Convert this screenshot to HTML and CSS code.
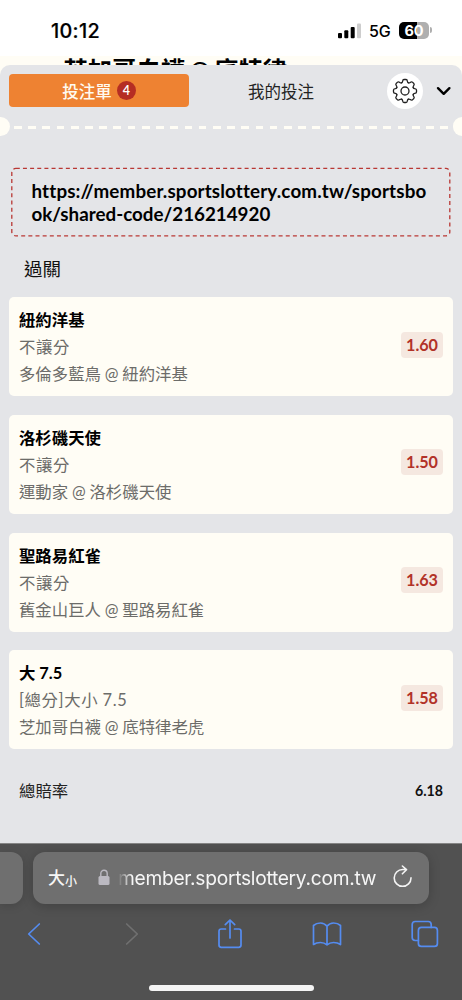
FILE: index.html
```html
<!DOCTYPE html>
<html lang="zh-Hant">
<head>
<meta charset="utf-8">
<meta name="viewport" content="width=device-width, initial-scale=1">
<title>投注單</title>
<link rel="stylesheet" href="styles.css">
</head>
<body>
<div class="screen">
  <header class="status">
    <span class="clock">10:12</span>
    <svg class="signal" width="24" height="16" viewBox="0 0 24 16"><rect x="0" y="10" width="4" height="5.3" rx="1"/><rect x="6.3" y="7.3" width="4" height="8" rx="1"/><rect x="12.7" y="4" width="4" height="11.3" rx="1"/><rect x="19" y="0.5" width="4" height="14.8" rx="1" fill="#cdcdcd"/></svg>
    <span class="network">5G</span>
    <span class="battery"><span class="battery-level">60</span><i class="battery-tip"></i></span>
  </header>
  <div class="behind">芝加哥白襪 @ 底特律</div>
  <main class="sheet">
    <nav class="tabs">
      <div class="tab active">投注單<span class="count">4</span></div>
      <div class="tab mine">我的投注</div>
      <div class="gear"><svg width="26" height="26" viewBox="-13 -13 26 26" fill="none" stroke="#222" stroke-width="1.3" stroke-linecap="round">
        <defs><path id="tooth" d="M-3.4 -8.2Q-2.6 -8.6 -2.4 -9.7Q-2.2 -11.5 -1 -11.5H1Q2.2 -11.5 2.4 -9.7Q2.6 -8.6 3.4 -8.2"/></defs>
        <use href="#tooth"/><use href="#tooth" transform="rotate(45)"/><use href="#tooth" transform="rotate(90)"/><use href="#tooth" transform="rotate(135)"/><use href="#tooth" transform="rotate(180)"/><use href="#tooth" transform="rotate(225)"/><use href="#tooth" transform="rotate(270)"/><use href="#tooth" transform="rotate(315)"/>
        <circle r="4"/></svg></div>
      <svg class="chevron" width="16" height="10" viewBox="0 0 16 10" fill="none" stroke="#000" stroke-width="2.4" stroke-linecap="round" stroke-linejoin="round"><path d="M2 2.2L7.7 7.8L13.4 2.2"/></svg>
    </nav>
    <div class="tear"><i class="notch"></i><i class="dashes"></i><i class="notch right"></i></div>
    <div class="link-box">
      <svg class="link-frame" width="440" height="70" viewBox="0 0 440 70" fill="none" stroke="#b93834"><rect x="0.8" y="1.4" width="438" height="67.5" rx="4" stroke-width="1.3" stroke-dasharray="4 3.15"/></svg>
      <span class="link-start">https://member.sportslottery.com.tw/sportsbo</span><br>ok/shared-code/216214920
    </div>
    <h2 class="mode">過關</h2>
    <section class="bets">
      <article class="bet"><div><h3>紐約洋基</h3><p class="market">不讓分</p><p>多倫多藍鳥 @ 紐約洋基</p></div><span class="odds">1.60</span></article>
      <article class="bet"><div><h3>洛杉磯天使</h3><p class="market">不讓分</p><p>運動家 @ 洛杉磯天使</p></div><span class="odds">1.50</span></article>
      <article class="bet"><div><h3>聖路易紅雀</h3><p class="market">不讓分</p><p>舊金山巨人 @ 聖路易紅雀</p></div><span class="odds">1.63</span></article>
      <article class="bet"><div><h3>大 7.5</h3><p class="market">[總分]大小 7.5</p><p>芝加哥白襪 @ 底特律老虎</p></div><span class="odds">1.58</span></article>
    </section>
    <div class="total"><span>總賠率</span><b>6.18</b></div>
  </main>
  <footer class="browser">
    <div class="address-row">
      <div class="side-tab"></div>
      <div class="address">
        <span class="size-big">大</span><span class="size-small">小</span>
        <svg class="lock" width="12" height="17" viewBox="0 0 12 17"><rect x="0.5" y="7" width="11" height="9" rx="1.5" fill="#bbb9c1"/><path d="M2.8 7.5V4.4a3.2 3.2 0 0 1 6.4 0V7.5" fill="none" stroke="#bbb9c1" stroke-width="1.4"/></svg>
        <span class="domain">member.sportslottery.com.tw</span>
        <svg class="reload" width="20" height="23" viewBox="0 0 20 23" fill="none" stroke="#f4f4f4" stroke-width="1.6" stroke-linecap="round" stroke-linejoin="round"><path d="M18 12.9A8.4 8.4 0 1 1 9.6 4.5H13.5M9.4 1L13.5 4.7L9.4 8.8"/></svg>
      </div>
    </div>
    <div class="tools">
      <svg width="14" height="24" viewBox="0 0 14 24"><path d="M12.3 2L1.7 12L12.3 22"/></svg>
      <svg class="disabled" width="14" height="24" viewBox="0 0 14 24"><path d="M1.7 2L12.3 12L1.7 22"/></svg>
      <svg class="share" width="26" height="32" viewBox="0 0 26 32"><path d="M8.5 11H4.3Q2 11 2 13.3V27Q2 29.3 4.3 29.3H21.7Q24 29.3 24 27V13.3Q24 11 21.7 11H17.5M13 20V2.2M8.3 6.7L13 2L17.7 6.7"/></svg>
      <svg width="30" height="26" viewBox="0 0 30 26"><path d="M15 5.2Q12.5 2 8.4 2Q4.3 2 1.5 4.5V23.5Q4.4 21.5 8.4 21.5Q12.3 21.5 15 23.8Q17.7 21.5 21.6 21.5Q25.6 21.5 28.5 23.5V4.5Q25.7 2 21.6 2Q17.5 2 15 5.2V23.8"/></svg>
      <svg class="pages" width="28" height="28" viewBox="0 0 28 28"><path d="M7.4 20.5H4.2Q1.2 20.5 1.2 17.5V4.5Q1.2 1.5 4.2 1.5H17.2Q20.2 1.5 20.2 4.5V7.4"/><rect x="7.4" y="7.4" width="19" height="19" rx="3"/></svg>
    </div>
    <div class="home"></div>
  </footer>
</div>
</body>
</html>
```

FILE: styles.css
```css
* { box-sizing: border-box; }
body { margin: 0; background: #fff; font-family: Lato, "Noto Sans CJK TC", sans-serif; font-variant-ligatures: none; }
h2, h3, p { margin: 0; font-weight: 400; }
svg { display: block; flex: none; }
.screen { width: 462px; height: 1000px; overflow: hidden; display: flex; flex-direction: column; background: #fffdf5; }

.status { height: 56px; flex: none; background: #fff; display: flex; align-items: flex-start; padding: 23px 31px 0 51px; font-family: Inter, "Liberation Sans", sans-serif; }
.clock { width: 287px; font-size: 19.8px; line-height: 17px; font-weight: 500; letter-spacing: 0.3px; -webkit-text-stroke: 0.2px #000; }
.signal { margin-right: 7px; }
.network { width: 30px; font-size: 16px; line-height: 17px; font-weight: 500; letter-spacing: -0.1px; }
.battery { position: relative; width: 30px; height: 17px; margin-top: -1px; border-radius: 5px; background: linear-gradient(90deg, #000 60%, #afafaf 60%); }
.battery-level { display: block; text-align: center; font-size: 14.5px; line-height: 17px; font-weight: 700; color: #fff; }
.battery-tip { position: absolute; right: -3px; top: 5px; width: 2px; height: 6px; border-radius: 0 2px 2px 0; background: #afafaf; }

.behind { height: 9px; flex: none; overflow: hidden; padding-left: 63.5px; font-size: 24.3px; line-height: 28px; font-weight: 700; white-space: nowrap; word-spacing: -1.6px; }

.sheet { height: 778px; flex: none; border-radius: 10px 10px 0 0; background: #e4e5e8; }
.tabs { display: flex; align-items: center; height: 51px; padding-left: 9px; }
.tab { display: flex; align-items: center; justify-content: center; width: 180px; height: 33px; font-size: 16.5px; color: #222; }
.tab.active { border-radius: 4px; background: #ee8232; color: #fffaf0; font-weight: 500; }
.tab.mine { width: 184px; }
.count { width: 19px; height: 19px; margin-left: 5px; border-radius: 50%; background: #b52d23; color: #fff; font-size: 12.5px; line-height: 19px; font-weight: 600; text-align: center; }
.gear { display: grid; place-items: center; width: 36px; height: 36px; margin-left: 14px; border-radius: 50%; background: #fff; }
.chevron { margin: 1px 0 0 13px; }

.tear { display: flex; align-items: center; height: 21px; justify-content: space-between; }
.notch { width: 9.5px; height: 19px; border-radius: 0 9.5px 9.5px 0; background: #fffdf5; }
.notch.right { border-radius: 9.5px 0 0 9.5px; }
.dashes { width: 434.5px; height: 3px; margin-top: 2px; background: repeating-linear-gradient(90deg, #fffdf5 0 7.7px, transparent 7.7px 14.21px); }

.link-box { position: relative; width: 440px; height: 70px; margin: 30px 0 0 11px; padding: 12px 0 0 20.5px; font-size: 18.8px; line-height: 23.4px; font-weight: 700; white-space: nowrap; }
.link-start { letter-spacing: 0.15px; }
.link-frame { position: absolute; left: 0; top: 0; }
.mode { height: 60px; padding: 17px 0 0 24px; font-size: 18.5px; line-height: 30px; color: #111; }

.bets { display: grid; gap: 18.8px; padding: 0 9.3px; }
.bet { display: flex; justify-content: space-between; align-items: center; height: 99px; padding: 0 9.7px; border-radius: 5px; background: #fffdf5; }
.bet h3 { font-size: 16.4px; line-height: 27px; font-weight: 700; }
.bet p { font-size: 16.4px; line-height: 27px; color: #6c6c69; white-space: nowrap; word-spacing: -0.4px; }
.bet .market { letter-spacing: 0.6px; }
.odds { width: 42px; height: 26px; margin-top: -4px; border-radius: 4px; background: #f5e8e0; color: #b23228; font-size: 16.2px; line-height: 26px; font-weight: 700; text-align: center; }
.total { display: flex; justify-content: space-between; align-items: center; padding: 28px 19px 0; font-size: 16.4px; line-height: 27px; color: #222; }
.total b { color: #111; font-size: 14.2px; font-weight: 700; }

.browser { flex: 1; border-top: 1px solid #858585; background: #515151; font-family: Inter, "Liberation Sans", "Noto Sans CJK TC", sans-serif; }
.address-row { display: flex; gap: 10px; padding-top: 8px; }
.side-tab { width: 23px; height: 52px; border-radius: 0 12px 12px 0; background: #6f6f6f; box-shadow: 0 2px 10px #0002; }
.address { display: flex; align-items: center; width: 396px; height: 52px; padding-left: 15px; border-radius: 12px; background: #6f6f6f; box-shadow: 0 2px 12px #0003; color: #f6f6f6; }
.size-big { font-size: 17px; font-weight: 500; line-height: 24px; }
.size-small { font-size: 12px; font-weight: 500; padding-top: 4px; }
.lock { margin: -2px 8px 0 21px; }
.domain { width: 260px; margin-right: -1px; font-size: 19.2px; letter-spacing: -0.28px; white-space: nowrap; -webkit-mask-image: linear-gradient(90deg, transparent 0, #000 14px); mask-image: linear-gradient(90deg, transparent 0, #000 14px); }
.reload { margin: -3px 0 0 16px; }
.tools { display: grid; grid-template-columns: 97px 99px 97px 98px 97px; justify-items: center; align-items: center; height: 62px; margin-left: -15px; fill: none; stroke: #558cf0; stroke-width: 1.7; stroke-linecap: round; stroke-linejoin: round; padding-bottom: 2px; }
.share, .pages { margin: -1px 0 0 1px; }
.disabled { stroke: #707070; }
.home { width: 165px; height: 6px; margin: 19px auto 0 149px; border-radius: 3px; background: #f4f4f4; }
```
